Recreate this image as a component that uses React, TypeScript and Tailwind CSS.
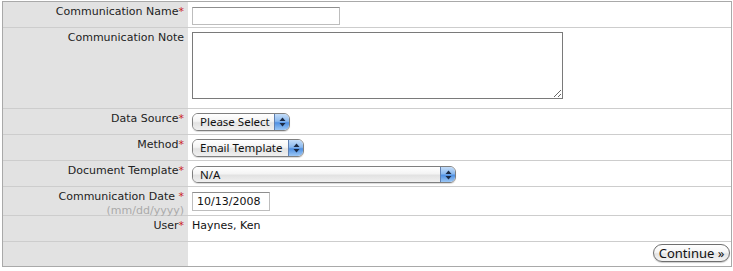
import React from 'react';

const font = "font-['DejaVu_Sans','Verdana',sans-serif]";
const aquaFont = "font-['Noto_Sans','Open_Sans',sans-serif]";

function Req({ space }: { space?: boolean }) {
  return <span className="text-[#cc2222]">{space ? ' *' : '*'}</span>;
}

function Row({
  label,
  h,
  pt,
  last,
  children,
}: {
  label?: React.ReactNode;
  h: string;
  pt: string;
  last?: boolean;
  children?: React.ReactNode;
}) {
  return (
    <div className={`flex ${h} ${last ? '' : 'border-b border-[#cdcdcd]'}`}>
      <div className="w-[185px] shrink-0 bg-[#e2e2e2] pr-[4px] pt-[3px] text-right leading-[14px] text-[#222]">
        {label}
      </div>
      <div className={`flex-1 pl-[4px] ${pt}`}>{children}</div>
    </div>
  );
}

function Arrows() {
  return (
    <svg width="7" height="10" viewBox="0 0 7 10">
      <path d="M3.5 0.5 L6.5 4 L0.5 4 Z" fill="#1b2a44" />
      <path d="M3.5 9.5 L6.5 6 L0.5 6 Z" fill="#1b2a44" />
    </svg>
  );
}

function AquaSelect({ value, w, h = 'h-[18px]' }: { value: string; w: string; h?: string }) {
  return (
    <div
      className={`flex ${w} ${h} overflow-hidden rounded-[6px] border border-[#7f7f7f] shadow-[0_1px_1px_rgba(0,0,0,0.15)]`}
    >
      <div
        className={`${aquaFont} flex flex-1 items-center bg-[linear-gradient(#ffffff_0%,#f4f4f4_45%,#e2e2e2_55%,#f0f0f0_100%)] pl-[7px] text-[11.5px] leading-none text-[#111]`}
      >
        {value}
      </div>
      <div className="flex w-[15px] items-center justify-center border-l border-[#5f7fb0] bg-[linear-gradient(#c4ddf9_0%,#8bb9ee_45%,#4f90e2_55%,#9cc7f5_100%)]">
        <Arrows />
      </div>
    </div>
  );
}

export default function App() {
  return (
    <div className={`${font} bg-white text-[11px] text-[#111]`}>
      <div className="ml-[2px] mt-px w-[730px] border border-[#a9a9a9]">
        <Row label={<>Communication Name<Req /></>} h="h-[26px]" pt="pt-[5px]">
          <input
            defaultValue=""
            className="block h-[18px] w-[148px] border border-[#bdbdbd] border-t-[#8e8e8e] bg-white px-[3px] text-[11px] outline-none"
          />
        </Row>
        <Row label="Communication Note" h="h-[81px]" pt="pt-[4px]">
          <textarea
            defaultValue=""
            className="block h-[67px] w-[371px] resize border border-[#7a7a7a] bg-white p-[2px] text-[11px] outline-none"
          />
        </Row>
        <Row label={<>Data Source<Req /></>} h="h-[26px]" pt="pt-[4px]">
          <AquaSelect value="Please Select" w="w-[98px]" />
        </Row>
        <Row label={<>Method<Req /></>} h="h-[26px]" pt="pt-[4px]">
          <AquaSelect value="Email Template" w="w-[112px]" />
        </Row>
        <Row label={<>Document Template<Req /></>} h="h-[26px]" pt="pt-[5px]">
          <AquaSelect value="N/A" w="w-[264px]" h="h-[17px]" />
        </Row>
        <Row
          label={
            <>
              <div>Communication Date<Req space /></div>
              <div className="leading-[13px] text-[#aaaaaa]">(mm/dd/yyyy)</div>
            </>
          }
          h="h-[29px]"
          pt="pt-[5px]"
        >
          <input
            defaultValue="10/13/2008"
            className="block h-[19px] w-[78px] border border-[#bdbdbd] border-t-[#8e8e8e] bg-white px-[4px] text-[11px] text-[#111] outline-none"
          />
        </Row>
        <Row label={<>User<Req /></>} h="h-[26px]" pt="pt-[3px] leading-[14px]">
          Haynes, Ken
        </Row>
        <Row h="h-[24px]" pt="pt-[2px] flex justify-end pr-[1px]" last>
          <button
            className={`${aquaFont} h-[18px] w-[77px] rounded-full border border-[#6f6f6f] bg-[linear-gradient(#ffffff_0%,#f6f6f6_45%,#e4e4e4_55%,#f4f4f4_100%)] text-[13px] leading-none text-[#111] shadow-[0_1px_1px_rgba(0,0,0,0.2)]`}
          >
            Continue »
          </button>
        </Row>
      </div>
    </div>
  );
}
